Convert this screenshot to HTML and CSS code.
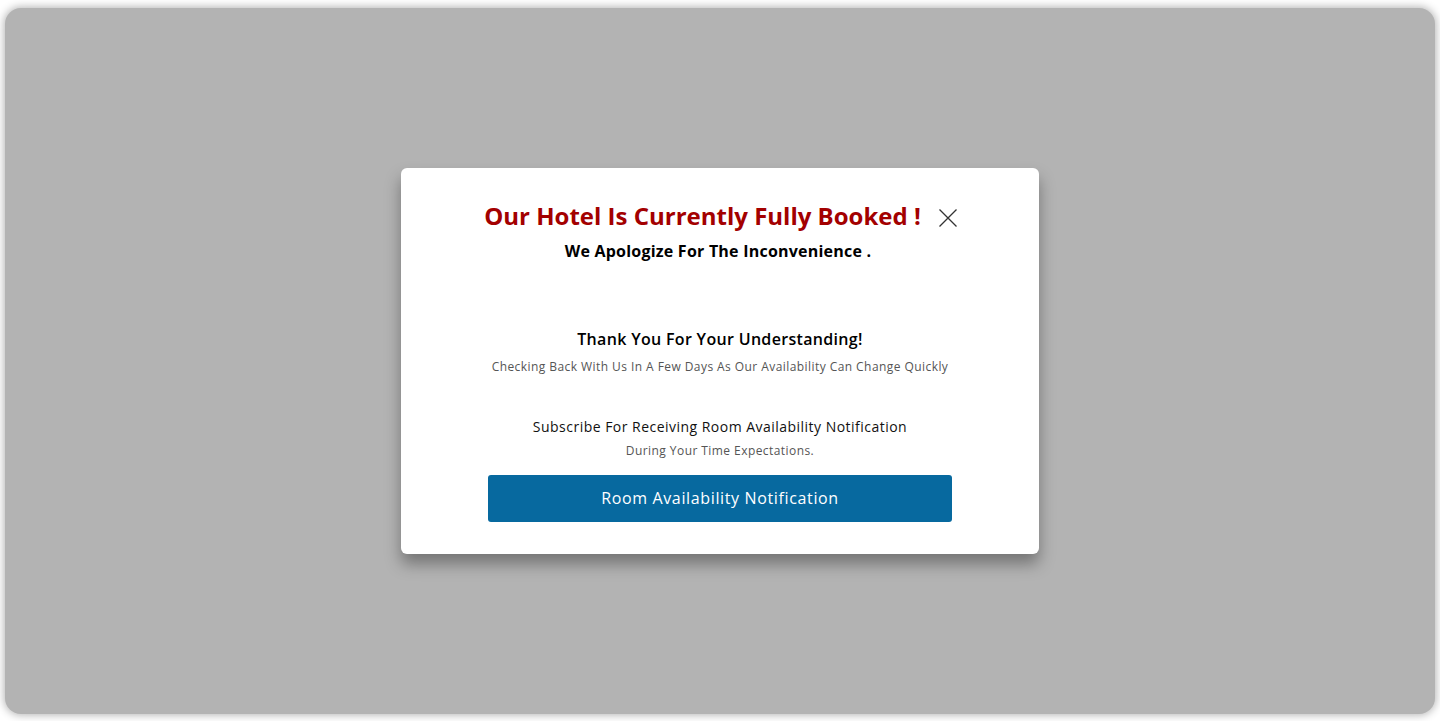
FILE: index.html
```html
<!DOCTYPE html>
<html lang="en">
<head>
<meta charset="utf-8">
<title>Fully Booked</title>
<link rel="stylesheet" href="styles.css">
</head>
<body>
<div class="overlay">
  <div class="modal">
    <div class="title-row">
      <h1 class="title">Our Hotel Is Currently Fully Booked !</h1>
      <button class="close" aria-label="Close">
        <svg width="20" height="20" viewBox="0 0 20 20"><path d="M1.5 1.5 L18.5 18.5 M18.5 1.5 L1.5 18.5" stroke="#333" stroke-width="1.3" fill="none"/></svg>
      </button>
    </div>
    <p class="apology">We Apologize For The Inconvenience .</p>
    <p class="thanks">Thank You For Your Understanding!</p>
    <p class="note">Checking Back With Us In A Few Days As Our Availability Can Change Quickly</p>
    <p class="subscribe">Subscribe For Receiving Room Availability Notification</p>
    <p class="note during">During Your Time Expectations.</p>
    <button class="notify">Room Availability Notification</button>
  </div>
</div>
</body>
</html>
```
FILE: styles.css
```css
html, body {
  margin: 0;
  padding: 0;
  background: #ffffff;
  height: 100%;
}
body {
  padding: 8px 5px 7px;
  box-sizing: border-box;
  font-family: "Open Sans", "Liberation Sans", sans-serif;
}
.overlay {
  height: 100%;
  background: #b3b3b3;
  border-radius: 16px;
  box-shadow: 0 0 8px 1px #b3b3b3;
  display: flex;
  align-items: center;
  justify-content: center;
}
.modal {
  width: 638px;
  box-sizing: border-box;
  background: #ffffff;
  border-radius: 6px;
  box-shadow: 0 10px 16px rgba(0, 0, 0, 0.35);
  padding: 30px 40px 32px;
  display: flex;
  flex-direction: column;
  align-items: center;
  text-align: center;
  margin-top: -1px;
  white-space: nowrap;
}
.title-row {
  display: flex;
  align-items: center;
  justify-content: center;
  gap: 17px;
  margin-left: 2px;
}
.title {
  margin: 0;
  font-size: 24px;
  line-height: 36px;
  font-weight: 700;
  color: #a30000;
  letter-spacing: 0;
}
.close {
  background: none;
  border: 0;
  padding: 0;
  width: 20px;
  height: 20px;
  margin-top: 5px;
  cursor: pointer;
  display: flex;
}
.apology {
  margin: 5px 0 0 -4px;
  font-size: 16px;
  line-height: 24px;
  font-weight: 700;
  color: #000;
  letter-spacing: 0.014em;
}
.thanks {
  margin: 64px 0 0;
  font-size: 16px;
  line-height: 24px;
  font-weight: 600;
  color: #000;
  letter-spacing: 0.02em;
}
.note {
  margin: 7px 0 0;
  font-size: 12px;
  line-height: 18px;
  color: #555;
  letter-spacing: 0.036em;
}
.subscribe {
  margin: 40px 0 0;
  font-size: 14px;
  line-height: 21px;
  color: #111;
  letter-spacing: 0.034em;
}
.during {
  margin-top: 5px;
}
.notify {
  margin-top: 15px;
  width: 464px;
  height: 47px;
  border: 0;
  border-radius: 3px;
  background: #07699f;
  color: #ffffff;
  font-family: inherit;
  font-size: 16px;
  font-weight: 500;
  letter-spacing: 0.04em;
  cursor: pointer;
}
```
